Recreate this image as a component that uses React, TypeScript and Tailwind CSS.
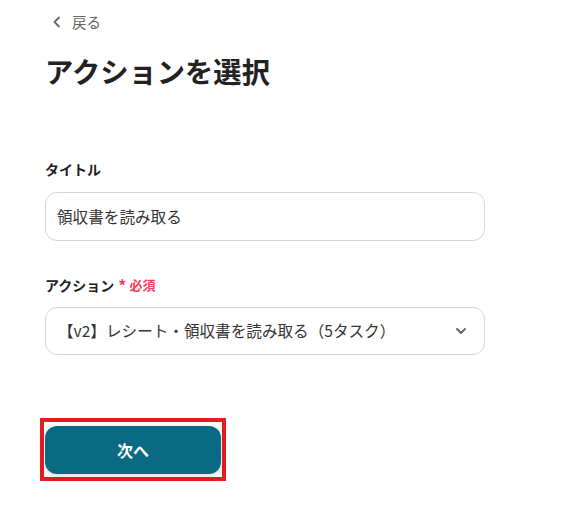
import React from "react";

export default function App() {
  const font = { fontFamily: '"Noto Sans CJK JP", "Noto Sans", sans-serif' };
  return (
    <div className="w-[585px] h-[506px] bg-white text-[#222] overflow-hidden" style={font}>
      <div className="pl-[45px] pt-[11px] w-[485px]">
        <div className="flex items-center gap-[8px] text-[#666] text-[14.5px] leading-[22px] h-[22px]">
          <svg width="14" height="14" viewBox="0 0 14 14" className="ml-[5px]">
            <path d="M9 2.5 L4.5 7 L9 11.5" fill="none" stroke="#666" strokeWidth="1.8" strokeLinecap="round" strokeLinejoin="round" />
          </svg>
          <span>戻る</span>
        </div>
        <h1 className="mt-[18px] text-[28.3px] font-bold leading-[40px] text-[#222]">アクションを選択</h1>

        <div className="mt-[68px] text-[14px] font-bold leading-[20px]">タイトル</div>
        <div className="mt-[13px] h-[49px] rounded-[12px] border border-[#d4d6dc] flex items-center px-[11px] text-[15.6px] text-[#333]">
          領収書を読み取る
        </div>

        <div className="mt-[34px] flex items-center text-[14px] font-bold leading-[20px]">
          <span>アクション</span>
          <span className="ml-[4px] text-[#f0405a] text-[16px] font-bold leading-[20px]">*</span>
          <span className="ml-[3px] text-[#f0405a] text-[13px] font-bold">必須</span>
        </div>
        <div className="mt-[12px] h-[48px] rounded-[12px] border border-[#d4d6dc] flex items-center justify-between pl-[12px] pr-[16px] text-[15.6px] text-[#333]">
          <span>【v2】レシート・領収書を読み取る（5タスク）</span>
          <svg width="14" height="14" viewBox="0 0 14 14">
            <path d="M3 5 L7 9 L11 5" fill="none" stroke="#666" strokeWidth="2" strokeLinecap="round" strokeLinejoin="round" />
          </svg>
        </div>

        <div className="mt-[63px] -ml-[5px] w-fit border-[4px] border-[#e51c23] pt-[4px] pb-[3px] px-[1px]">
          <button className="block w-[176px] h-[48px] rounded-[12px] bg-[#0b6a83] text-white text-[16px] font-bold shadow-[0_2px_8px_rgba(0,0,0,0.15)]">
            次へ
          </button>
        </div>
      </div>
    </div>
  );
}
